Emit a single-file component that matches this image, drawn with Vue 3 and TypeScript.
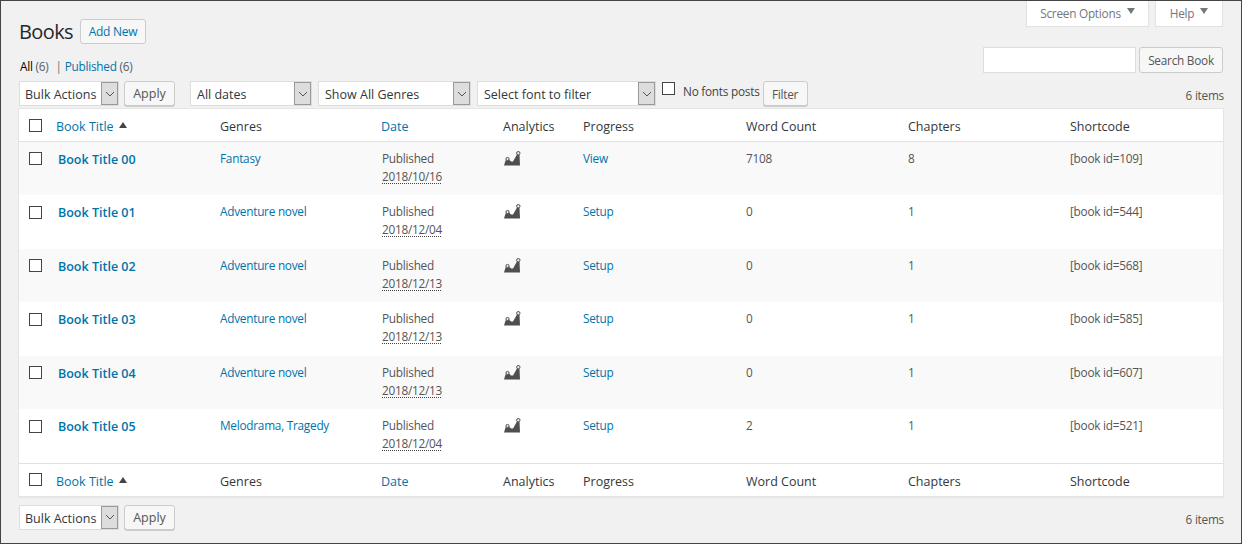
<script setup lang="ts">
interface Book {
  title: string
  genres: string
  date: string
  progress: string
  words: string
  chapters: string
  id: number
}
const books: Book[] = [
  { title: 'Book Title 00', genres: 'Fantasy', date: '2018/10/16', progress: 'View', words: '7108', chapters: '8', id: 109 },
  { title: 'Book Title 01', genres: 'Adventure novel', date: '2018/12/04', progress: 'Setup', words: '0', chapters: '1', id: 544 },
  { title: 'Book Title 02', genres: 'Adventure novel', date: '2018/12/13', progress: 'Setup', words: '0', chapters: '1', id: 568 },
  { title: 'Book Title 03', genres: 'Adventure novel', date: '2018/12/13', progress: 'Setup', words: '0', chapters: '1', id: 585 },
  { title: 'Book Title 04', genres: 'Adventure novel', date: '2018/12/13', progress: 'Setup', words: '0', chapters: '1', id: 607 },
  { title: 'Book Title 05', genres: 'Melodrama, Tragedy', date: '2018/12/04', progress: 'Setup', words: '2', chapters: '1', id: 521 },
]
const colWidths = [27, 164, 161, 122, 80, 163, 162, 162, 163]
const filters = [
  { label: 'All dates', w: 122 },
  { label: 'Show All Genres', w: 153 },
  { label: 'Select font to filter', w: 179 },
]
</script>

<template>
  <div class="page">
    <header class="head">
      <div class="head-left">
        <div class="title-row">
          <h1>Books</h1>
          <a class="btn add">Add New</a>
        </div>
        <div class="subsub">
          <b>All</b> <span class="n">(6)</span><span class="sep">|</span><a>Published</a> <span class="n">(6)</span>
        </div>
      </div>
      <div class="head-right">
        <div class="tabs">
          <div class="tab t1">Screen Options<i class="tri"></i></div>
          <div class="tab t2">Help<i class="tri"></i></div>
        </div>
        <div class="search">
          <div class="input"></div>
          <div class="btn">Search Book</div>
        </div>
      </div>
    </header>

    <div class="nav top">
      <div class="sel" style="width: 100px"><span>Bulk Actions</span><i class="arrow"><svg width="10" height="6" viewBox="0 0 10 6"><path d="M1 1l4 4 4-4" fill="none" stroke="#555" /></svg></i></div>
      <div class="btn apply">Apply</div>
      <div v-for="(f, i) in filters" :key="f.label" class="sel" :class="i === 0 ? 'first' : 'filter'" :style="{ width: f.w + 'px' }"><span>{{ f.label }}</span><i class="arrow"><svg width="10" height="6" viewBox="0 0 10 6"><path d="M1 1l4 4 4-4" fill="none" stroke="#555" /></svg></i></div>
      <div class="nofonts"><i class="cb"></i><span>No fonts posts</span></div>
      <div class="btn filter-btn">Filter</div>
      <div class="count">6 items</div>
    </div>

    <table class="list">
      <colgroup><col v-for="(w, i) in colWidths" :key="i" :style="{ width: w + 'px' }" /></colgroup>
      <thead>
        <tr>
          <th class="check"><i class="cb"></i></th>
          <th><a>Book Title</a><i class="up"></i></th>
          <th>Genres</th>
          <th><a>Date</a></th>
          <th>Analytics</th>
          <th>Progress</th>
          <th>Word Count</th>
          <th>Chapters</th>
          <th>Shortcode</th>
        </tr>
      </thead>
      <tbody>
        <tr v-for="b in books" :key="b.id">
          <td class="check"><i class="cb"></i></td>
          <td class="name"><a>{{ b.title }}</a></td>
          <td><a>{{ b.genres }}</a></td>
          <td class="date">Published<br /><abbr>{{ b.date }}</abbr></td>
          <td class="chart">
            <svg width="17" height="15" viewBox="0 0 17 15">
              <path d="M0 14.500L1.500 9.500L5 8.500L7 10.500L9 10.500L13 3.500L15.500 3.500L16 14.500Z" fill="#4f4f4f" />
              <circle cx="3.500" cy="8" r="1.600" fill="#e8eef2" stroke="#4f4f4f" />
              <circle cx="14.300" cy="2.200" r="1.700" fill="#e8eef2" stroke="#4f4f4f" />
            </svg>
          </td>
          <td><a>{{ b.progress }}</a></td>
          <td>{{ b.words }}</td>
          <td>{{ b.chapters }}</td>
          <td>[book id={{ b.id }}]</td>
        </tr>
      </tbody>
      <tfoot>
        <tr>
          <th class="check"><i class="cb"></i></th>
          <th><a>Book Title</a><i class="up"></i></th>
          <th>Genres</th>
          <th><a>Date</a></th>
          <th>Analytics</th>
          <th>Progress</th>
          <th>Word Count</th>
          <th>Chapters</th>
          <th>Shortcode</th>
        </tr>
      </tfoot>
    </table>

    <div class="nav bottom">
      <div class="sel" style="width: 100px"><span>Bulk Actions</span><i class="arrow"><svg width="10" height="6" viewBox="0 0 10 6"><path d="M1 1l4 4 4-4" fill="none" stroke="#555" /></svg></i></div>
      <div class="btn apply">Apply</div>
      <div class="count">6 items</div>
    </div>
  </div>
</template>

<style>
html, body { margin: 0; background: #f1f1f1; }
</style>

<style scoped>
.page {
  box-sizing: border-box;
  width: 1242px;
  height: 544px;
  border: 1px solid #444;
  padding: 0 18px;
  background: #f1f1f1;
  color: #444;
  font: 11.800px/18px "Open Sans", sans-serif;
  letter-spacing: -0.25px;
  overflow: hidden;
}
a { color: #0073aa; }
.head { display: flex; justify-content: space-between; height: 80px; }
.head-left { padding-top: 18px; }
.title-row { display: flex; align-items: center; gap: 7px; height: 25px; }
h1 { margin: 0; font-size: 20px; letter-spacing: -0.6px; font-weight: 400; line-height: 25px; color: #23282d; }
.btn {
  box-sizing: border-box;
  display: inline-flex;
  align-items: center;
  justify-content: center;
  height: 25px;
  padding-top: 1px;
  border: 1px solid #ccc;
  border-radius: 3px;
  background: #f7f7f7;
  box-shadow: 0 1px 0 #ccc;
  color: #555;
}
.add { width: 66px; height: 25px; color: #0073aa; box-shadow: none; font-size: 12px; padding-top: 0; }
.subsub { margin-top: 13px; color: #666; margin-left: 1px; }
.subsub b { font-weight: 400; color: #000; }
.sep { margin: 0 3px 0 7px; color: #72777c; }
.n { color: #555d66; }
.head-right { display: flex; flex-direction: column; align-items: flex-end; }
.tabs { display: flex; gap: 6px; height: 26px; }
.tab {
  box-sizing: border-box;
  display: flex;
  align-items: center;
  justify-content: center;
  gap: 6px;
  height: 26px;
  padding-bottom: 2px;
  background: #fff;
  border: 1px solid #e1e1e1;
  border-top: 0;
  color: #72777c;
}
.t1 { width: 123px; }
.t2 { width: 68px; }
.tri { width: 0; height: 0; border: 4px solid transparent; border-top: 6px solid #72777c; border-bottom: 0; margin-top: -3px; }
.search { display: flex; gap: 3px; margin-top: 20px; }
.input { box-sizing: border-box; width: 153px; height: 26px; background: #fff; border: 1px solid #ddd; }
.search .btn { width: 84px; height: 26px; padding-top: 0; box-shadow: none; }

.nav { display: flex; align-items: flex-start; }
.top { height: 27px; }
.bottom { margin-top: 8px; }
.sel {
  box-sizing: border-box;
  display: flex;
  justify-content: space-between;
  height: 25px;
  background: #fff;
  border: 1px solid #ddd;
  color: #32373c;
  line-height: 25px;
  padding-left: 5px;
  font-size: 12.500px;
  letter-spacing: 0;
}
.sel.first, .sel.filter { padding-left: 6px; }
.arrow {
  box-sizing: border-box;
  display: flex;
  align-items: center;
  justify-content: center;
  width: 17px;
  background: #ddd;
  border: 1px solid #999;
}
.apply { width: 51px; margin-left: 5px; font-size: 12.500px; letter-spacing: 0; }
.first { margin-left: 15px; }
.filter { margin-left: 6px; }
.nofonts { display: flex; gap: 8px; margin: 1px 0 0 6px; height: 18px; }
.filter-btn { width: 45px; margin-left: 3px; }
.count { margin-left: auto; margin-top: 5px; color: #555; margin-right: -1px; }
.cb {
  box-sizing: border-box;
  display: block;
  width: 13px;
  height: 13px;
  background: #fff;
  border: 1px solid #444;
}
.list {
  width: 1206px;
  margin-left: -1px;
  table-layout: fixed;
  border-collapse: separate;
  border-spacing: 0;
  background: #fff;
  border: 1px solid #e5e5e5;
  box-shadow: 0 1px 1px rgba(0, 0, 0, 0.04);
}
th, td { box-sizing: border-box; padding: 0 0 0 10px; text-align: left; vertical-align: top; font-weight: 400; }
th { font-size: 12.500px; line-height: 26px; color: #32373c; letter-spacing: 0; }
thead th { height: 32.500px; border-bottom: 1px solid #e1e1e1; padding-top: 5px; }
tfoot th { height: 33px; border-top: 1px solid #e1e1e1; padding-top: 5px; }
td { height: 53.500px; padding-top: 7.250px; color: #555; }
tbody tr:nth-child(odd) td { background: #f9f9f9; }
th.check { padding: 10px 0 0 10px; line-height: 0; }
td.check { padding: 10.500px 0 0 10px; line-height: 0; }
tfoot th.check { padding-top: 9px; }
.up { display: inline-block; width: 0; height: 0; border: 4.500px solid transparent; border-bottom: 6px solid #444; border-top: 0; margin: 0 0 3px 5px; }
td.name { font-size: 12.500px; font-weight: 600; padding-top: 9px; padding-left: 12px; letter-spacing: 0; }
td.date { padding-left: 11px; }
abbr { text-decoration: underline dotted #444; text-underline-offset: 2px; }
td.chart { padding: 9px 0 0 11px; }
.chart svg { display: block; }
</style>
